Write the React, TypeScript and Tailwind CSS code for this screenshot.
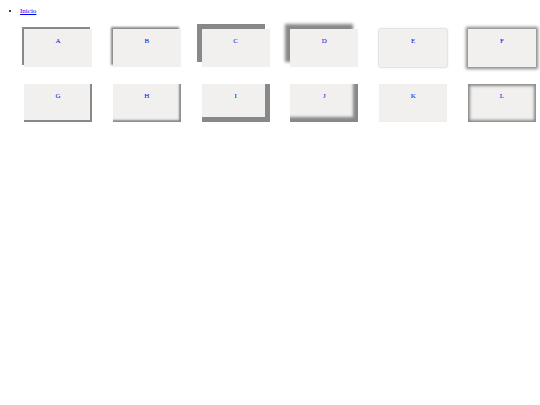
import React from "react";

const boxes: { l: string; s: string }[] = [
  { l: "A", s: "shadow-[-2px_-2px_0_#888]" },
  { l: "B", s: "shadow-[-2px_-2px_2px_#888]" },
  { l: "C", s: "shadow-[-5px_-5px_0_#888]" },
  { l: "D", s: "shadow-[-5px_-5px_3px_#888]" },
  { l: "E", s: "shadow-[0_0_2px_#aaa]" },
  { l: "F", s: "shadow-[0_0_3px_2px_#888]" },
  { l: "G", s: "shadow-[inset_-2px_-2px_0_#888]" },
  { l: "H", s: "shadow-[inset_-2px_-2px_2px_#888]" },
  { l: "I", s: "shadow-[inset_-5px_-5px_0_#888]" },
  { l: "J", s: "shadow-[inset_-5px_-5px_3px_#888]" },
  { l: "K", s: "shadow-[inset_0_0_1px_#ddd]" },
  { l: "L", s: "shadow-[inset_0_0_3px_2px_#888]" },
];

export default function App() {
  return (
    <div className="min-h-[405px] w-[540px] bg-white font-['Liberation_Serif',serif] text-[7px] text-black">
      <ul className="list-disc pl-[20px] pt-[6px] m-0">
        <li>
          <a href="#" className="text-[#0000ee] underline">Inicio</a>
        </li>
      </ul>
      <div className="grid grid-cols-[repeat(6,68px)] gap-x-[20.8px] gap-y-[17px] pl-[24px] pt-[12px]">
        {boxes.map((b) => (
          <div key={b.l} className={`h-[38px] bg-[#f1f0ef] text-center pt-[7px] ${b.s}`}>
            <a href="#" className="text-[#0000ee] no-underline">{b.l}</a>
          </div>
        ))}
      </div>
    </div>
  );
}
